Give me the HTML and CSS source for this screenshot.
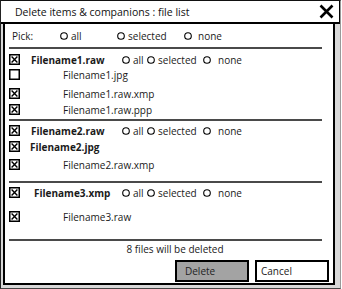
FILE: index.html
```html
<!DOCTYPE html>
<html>
<head>
<meta charset="utf-8">
<link rel="stylesheet" href="styles.css">
</head>
<body>
<div class="window">
  <div class="titlebar">
    <span class="title">Delete items &amp; companions : file list</span>
    <svg class="close" width="15" height="15" viewBox="0 0 15 15"><path d="M1.5 1.5 L13.5 13.5 M13.5 1.5 L1.5 13.5" stroke="#000" stroke-width="2.6" fill="none"/></svg>
  </div>
  <div class="body">
    <div class="pick">
      <span class="pick-label">Pick:</span>
      <span class="opt opt-all-p"><svg class="radio" width="8" height="8" viewBox="0 0 8 8"><circle cx="4" cy="4" r="3.3" fill="none" stroke="#000" stroke-width="1.1"/></svg>all</span>
      <span class="opt opt-sel-p"><svg class="radio" width="8" height="8" viewBox="0 0 8 8"><circle cx="4" cy="4" r="3.3" fill="none" stroke="#000" stroke-width="1.1"/></svg>selected</span>
      <span class="opt opt-none-p"><svg class="radio" width="8" height="8" viewBox="0 0 8 8"><circle cx="4" cy="4" r="3.3" fill="none" stroke="#000" stroke-width="1.1"/></svg><span class="none-p">none</span></span>
    </div>
    <div class="rule"></div>

    <div class="row mt5">
      <svg class="cb" width="11" height="11" viewBox="0 0 11 11"><rect x="0.75" y="0.75" width="9.5" height="9.5" fill="#fff" stroke="#000" stroke-width="1.5"/><path d="M2.6 2.6 L8.4 8.4 M8.4 2.6 L2.6 8.4" stroke="#000" stroke-width="1.4"/></svg>
      <span class="name">Filename1.raw</span>
      <span class="opt opt-all"><svg class="radio" width="8" height="8" viewBox="0 0 8 8"><circle cx="4" cy="4" r="3.3" fill="none" stroke="#000" stroke-width="1.1"/></svg>all</span>
      <span class="opt opt-sel"><svg class="radio" width="8" height="8" viewBox="0 0 8 8"><circle cx="4" cy="4" r="3.3" fill="none" stroke="#000" stroke-width="1.1"/></svg>selected</span>
      <span class="opt opt-none"><svg class="radio" width="8" height="8" viewBox="0 0 8 8"><circle cx="4" cy="4" r="3.3" fill="none" stroke="#000" stroke-width="1.1"/></svg><span class="none-h">none</span></span>
    </div>
    <div class="row mt4">
      <svg class="cb" width="11" height="11" viewBox="0 0 11 11"><rect x="0.75" y="0.75" width="9.5" height="9.5" fill="#fff" stroke="#000" stroke-width="1.5"/></svg>
      <span class="sub">Filename1.jpg</span>
    </div>
    <div class="row mt8">
      <svg class="cb" width="11" height="11" viewBox="0 0 11 11"><rect x="0.75" y="0.75" width="9.5" height="9.5" fill="#fff" stroke="#000" stroke-width="1.5"/><path d="M2.6 2.6 L8.4 8.4 M8.4 2.6 L2.6 8.4" stroke="#000" stroke-width="1.4"/></svg>
      <span class="sub">Filename1.raw.xmp</span>
    </div>
    <div class="row mt5">
      <svg class="cb" width="11" height="11" viewBox="0 0 11 11"><rect x="0.75" y="0.75" width="9.5" height="9.5" fill="#fff" stroke="#000" stroke-width="1.5"/><path d="M2.6 2.6 L8.4 8.4 M8.4 2.6 L2.6 8.4" stroke="#000" stroke-width="1.4"/></svg>
      <span class="sub">Filename1.raw.ppp</span>
    </div>
    <div class="rule mt4"></div>

    <div class="row mt4">
      <svg class="cb" width="11" height="11" viewBox="0 0 11 11"><rect x="0.75" y="0.75" width="9.5" height="9.5" fill="#fff" stroke="#000" stroke-width="1.5"/><path d="M2.6 2.6 L8.4 8.4 M8.4 2.6 L2.6 8.4" stroke="#000" stroke-width="1.4"/></svg>
      <span class="name">Filename2.raw</span>
      <span class="opt opt-all"><svg class="radio" width="8" height="8" viewBox="0 0 8 8"><circle cx="4" cy="4" r="3.3" fill="none" stroke="#000" stroke-width="1.1"/></svg>all</span>
      <span class="opt opt-sel"><svg class="radio" width="8" height="8" viewBox="0 0 8 8"><circle cx="4" cy="4" r="3.3" fill="none" stroke="#000" stroke-width="1.1"/></svg>selected</span>
      <span class="opt opt-none"><svg class="radio" width="8" height="8" viewBox="0 0 8 8"><circle cx="4" cy="4" r="3.3" fill="none" stroke="#000" stroke-width="1.1"/></svg><span class="none-h">none</span></span>
    </div>
    <div class="row mt5">
      <svg class="cb" width="11" height="11" viewBox="0 0 11 11"><rect x="0.75" y="0.75" width="9.5" height="9.5" fill="#fff" stroke="#000" stroke-width="1.5"/><path d="M2.6 2.6 L8.4 8.4 M8.4 2.6 L2.6 8.4" stroke="#000" stroke-width="1.4"/></svg>
      <span class="name-jpg">Filename2.jpg</span>
    </div>
    <div class="row mt7">
      <svg class="cb" width="11" height="11" viewBox="0 0 11 11"><rect x="0.75" y="0.75" width="9.5" height="9.5" fill="#fff" stroke="#000" stroke-width="1.5"/><path d="M2.6 2.6 L8.4 8.4 M8.4 2.6 L2.6 8.4" stroke="#000" stroke-width="1.4"/></svg>
      <span class="sub">Filename2.raw.xmp</span>
    </div>
    <div class="rule mt11"></div>

    <div class="row mt4">
      <svg class="cb" width="11" height="11" viewBox="0 0 11 11"><rect x="0.75" y="0.75" width="9.5" height="9.5" fill="#fff" stroke="#000" stroke-width="1.5"/><path d="M2.6 2.6 L8.4 8.4 M8.4 2.6 L2.6 8.4" stroke="#000" stroke-width="1.4"/></svg>
      <span class="name name-3">Filename3.xmp</span>
      <span class="opt opt-all"><svg class="radio" width="8" height="8" viewBox="0 0 8 8"><circle cx="4" cy="4" r="3.3" fill="none" stroke="#000" stroke-width="1.1"/></svg>all</span>
      <span class="opt opt-sel"><svg class="radio" width="8" height="8" viewBox="0 0 8 8"><circle cx="4" cy="4" r="3.3" fill="none" stroke="#000" stroke-width="1.1"/></svg>selected</span>
      <span class="opt opt-none"><svg class="radio" width="8" height="8" viewBox="0 0 8 8"><circle cx="4" cy="4" r="3.3" fill="none" stroke="#000" stroke-width="1.1"/></svg><span class="none-h">none</span></span>
    </div>
    <div class="row mt13">
      <svg class="cb" width="11" height="11" viewBox="0 0 11 11"><rect x="0.75" y="0.75" width="9.5" height="9.5" fill="#fff" stroke="#000" stroke-width="1.5"/><path d="M2.6 2.6 L8.4 8.4 M8.4 2.6 L2.6 8.4" stroke="#000" stroke-width="1.4"/></svg>
      <span class="sub">Filename3.raw</span>
    </div>
    <div class="rule mt17"></div>

    <div class="status">8 files will be deleted</div>
    <div class="buttons">
      <div class="btn btn-delete">Delete</div>
      <div class="btn btn-cancel">Cancel</div>
    </div>
  </div>
</div>
</body>
</html>
```
FILE: styles.css
```css
html, body {
  margin: 0;
  padding: 0;
  background: #fff;
}
body {
  font-family: "Open Sans", "Noto Sans", sans-serif;
  font-size: 10px;
  color: #1a1a1a;
}
.window {
  width: 341px;
  height: 289px;
  box-sizing: border-box;
  border: 1px solid #999;
  border-left-color: #222;
  border-top-color: #111;
  border-bottom-color: #444;
  background: #d8d8d8;
  display: flex;
  flex-direction: column;
}
.titlebar {
  height: 23px;
  box-sizing: border-box;
  background: #fff;
  border-bottom: 2px solid #000;
  border-right: 1px solid #000;
  display: flex;
  align-items: center;
  justify-content: space-between;
  padding-left: 14px;
  padding-right: 5px;
}
.title {
  font-size: 10.5px;
  color: #111;
}
.close {
  display: block;
}
.body {
  margin-left: 2px;
  width: 332px;
  height: 261px;
  box-sizing: border-box;
  background: #fff;
  border: 2px solid #000;
  border-top: none;
  display: flex;
  flex-direction: column;
}
.pick {
  height: 23px;
  display: flex;
  align-items: center;
  padding-left: 7px;
}
.pick-label {
  width: 48px;
}
.opt {
  display: inline-flex;
  align-items: center;
  gap: 3px;
  white-space: nowrap;
}
.radio {
  display: block;
  flex: none;
}
.opt-all-p { width: 57px; }
.opt-sel-p { width: 67px; }
.none-p { margin-left: 3px; }
.opt-all { width: 25px; }
.opt-sel { width: 56px; }
.none-h { margin-left: 4px; }
.rule {
  height: 2px;
  background: #4a4a4a;
  margin-left: 4px;
  margin-right: 11px;
  flex: none;
}
.row {
  display: flex;
  align-items: center;
  height: 11px;
  padding-left: 4px;
  flex: none;
  white-space: nowrap;
}
.cb {
  display: block;
  flex: none;
}
.name {
  font-weight: 700;
  margin-left: 11px;
  width: 91px;
}
.name-3 {
  padding-left: 3px;
  width: 88px;
}
.name-jpg {
  font-weight: 700;
  margin-left: 10px;
}
.sub {
  margin-left: 43px;
}
.mt4 { margin-top: 4px; }
.mt5 { margin-top: 5px; }
.mt7 { margin-top: 7px; }
.mt8 { margin-top: 8px; }
.mt11 { margin-top: 11px; }
.mt13 { margin-top: 13px; }
.mt17 { margin-top: 17px; }
.status {
  height: 14px;
  line-height: 14px;
  margin-top: 1px;
  text-align: center;
  padding-left: 12px;
  flex: none;
}
.buttons {
  margin-top: 4px;
  display: flex;
  justify-content: flex-end;
  gap: 6px;
  padding-right: 4px;
}
.btn {
  box-sizing: border-box;
  width: 74px;
  height: 22px;
  border: 2px solid #000;
  display: flex;
  align-items: center;
}
.btn-delete {
  background: #a3a3a3;
  padding-left: 8px;
  color: #222;
}
.btn-cancel {
  background: #fff;
  padding-left: 4px;
}
```
